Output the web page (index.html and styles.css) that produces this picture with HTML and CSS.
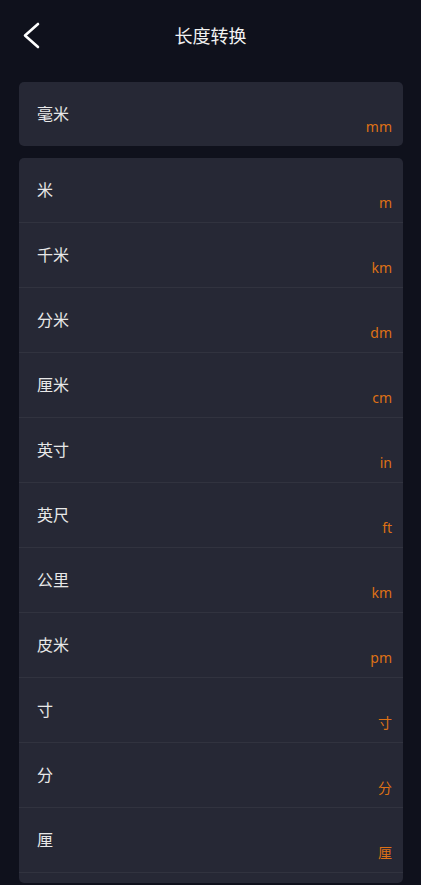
FILE: index.html
```html
<!DOCTYPE html>
<html lang="zh-CN">
<head>
  <meta charset="UTF-8" />
  <meta name="viewport" content="width=device-width, initial-scale=1.0" />
  <title>长度转换</title>
  <link rel="stylesheet" href="styles.css">
</head>
<body>
<header class="topbar">
  <a class="back" href="#" aria-label="返回">
    <svg width="20" height="28" viewBox="0 0 20 28">
      <path d="M16 2 L3 13.5 L16 25" fill="none" stroke="#ffffff" stroke-width="2.6" stroke-linecap="round" stroke-linejoin="round"/>
    </svg>
  </a>
  <h1>长度转换</h1>
</header>
<main class="content">
  <div class="card">
    <div class="row">
      <span class="name">毫米</span>
      <span class="unit">mm</span>
    </div>
  </div>

  <div class="card list">
    <div class="row"><span class="name">米</span><span class="unit">m</span></div>
    <div class="row"><span class="name">千米</span><span class="unit">km</span></div>
    <div class="row"><span class="name">分米</span><span class="unit">dm</span></div>
    <div class="row"><span class="name">厘米</span><span class="unit">cm</span></div>
    <div class="row"><span class="name">英寸</span><span class="unit">in</span></div>
    <div class="row"><span class="name">英尺</span><span class="unit">ft</span></div>
    <div class="row"><span class="name">公里</span><span class="unit">km</span></div>
    <div class="row"><span class="name">皮米</span><span class="unit">pm</span></div>
    <div class="row"><span class="name">寸</span><span class="unit">寸</span></div>
    <div class="row"><span class="name">分</span><span class="unit">分</span></div>
    <div class="row"><span class="name">厘</span><span class="unit">厘</span></div>
  </div>
</main>
</body>
</html>
```

FILE: styles.css
```css
body {
  margin: 0;
  padding: 0;
  background-color: #0f111c;
  color: #e8e8e8;
  font-family: "Noto Sans", "Noto Sans CJK SC", sans-serif;
  height: 885px;
  overflow: hidden;
}
.topbar {
  position: relative;
  height: 82px;
  display: flex;
  align-items: flex-start;
  justify-content: center;
}
.back {
  position: absolute;
  left: 22px;
  top: 22px;
  display: block;
  line-height: 0;
}
.topbar h1 {
  margin: 0;
  padding-top: 24px;
  font-size: 18px;
  line-height: 24px;
  font-weight: 400;
  color: #f2f2f2;
}
.content {
  padding: 0 18px 0 19px;
}
.card {
  background-color: #262835;
  border-radius: 5px;
  margin-bottom: 12px;
  overflow: hidden;
}
.list {
  padding-bottom: 10px;
}
.row {
  height: 64px;
  display: flex;
  justify-content: space-between;
  padding: 0 11px 0 18px;
}
.list .row {
  border-bottom: 1px solid #31333f;
}
.name {
  align-self: flex-start;
  padding-top: 22px;
  font-size: 16px;
  line-height: 20px;
  color: #e8e8e8;
}
.unit {
  align-self: flex-end;
  padding-bottom: 11px;
  font-size: 14px;
  line-height: 16px;
  color: #de7116;
}
```
